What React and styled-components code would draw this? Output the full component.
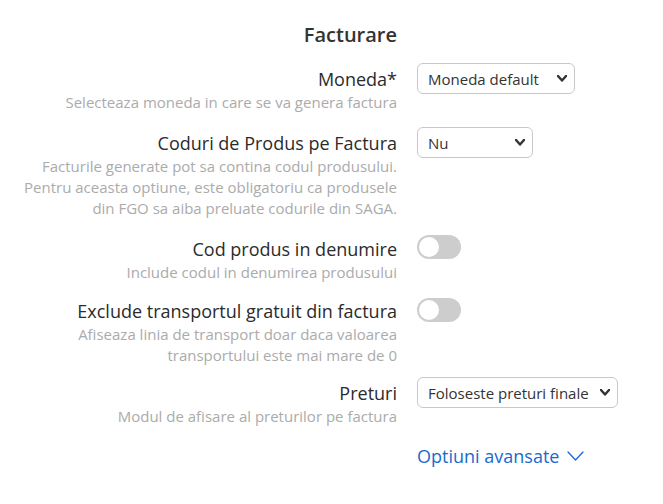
import React from 'react';
import styled, { createGlobalStyle } from 'styled-components';

const GlobalStyle = createGlobalStyle`
  html, body {
    margin: 0;
    padding: 0;
    background: #fff;
  }
  body {
    font-family: "Open Sans", "Noto Sans", sans-serif;
    color: #333;
  }
`;

const Page = styled.div`
  display: flex;
  flex-direction: column;
  padding-top: 22px;
`;

const Row = styled.div`
  display: grid;
  grid-template-columns: 397px 1fr;
  column-gap: 20px;
  margin-bottom: ${(p) => p.$gap ?? 16}px;
`;

const Title = styled.h2`
  margin: 0;
  text-align: right;
  font-size: 20px;
  font-weight: 600;
  line-height: 26px;
  color: #333;
`;

const LabelCol = styled.div`
  text-align: right;
`;

const Label = styled.div`
  font-size: 18px;
  line-height: 26px;
  color: #2b2b2b;
`;

const Desc = styled.div`
  font-size: 15px;
  line-height: 21px;
  color: #ababab;
`;

const Control = styled.div`
  display: flex;
  align-items: flex-start;
  margin-top: ${(p) => p.$offset ?? 0}px;
`;

const Select = styled.div`
  box-sizing: border-box;
  width: ${(p) => p.$width}px;
  height: 31px;
  border: 1px solid #c8c8c8;
  border-radius: 6px;
  background: #fff;
  display: flex;
  align-items: center;
  justify-content: space-between;
  padding: 0 7px 0 10px;
  font-size: 15px;
  color: #333;
`;

const Toggle = styled.div`
  width: 44px;
  height: 24px;
  border-radius: 12px;
  background: #cdcdcd;
  display: flex;
  align-items: center;
  padding: 2px;
  box-sizing: border-box;
`;

const Knob = styled.div`
  width: 20px;
  height: 20px;
  border-radius: 50%;
  background: #fff;
`;

const Advanced = styled.a`
  display: inline-flex;
  align-items: center;
  gap: 8px;
  color: #1a6ad0;
  font-size: 18px;
  line-height: 26px;
  text-decoration: none;
  cursor: pointer;
`;

const Chevron = ({ width = 10, height = 6.5, stroke = 2.4, color = '#333' }) => (
  <svg width={width} height={height} viewBox={`0 0 ${width} ${height}`} fill="none">
    <path
      d={`M1 1L${width / 2} ${height - 1}L${width - 1} 1`}
      stroke={color}
      strokeWidth={stroke}
      strokeLinecap="round"
      strokeLinejoin="round"
    />
  </svg>
);

const SelectBox = ({ width, value }) => (
  <Select $width={width}>
    <span>{value}</span>
    <Chevron />
  </Select>
);

const Switch = () => (
  <Toggle>
    <Knob />
  </Toggle>
);

export default function App() {
  return (
    <>
      <GlobalStyle />
      <Page>
        <Row $gap={18}>
          <Title>Facturare</Title>
        </Row>

        <Row $gap={17}>
          <LabelCol>
            <Label>Moneda*</Label>
            <Desc>Selecteaza moneda in care se va genera factura</Desc>
          </LabelCol>
          <Control $offset={-3}>
            <SelectBox width={158} value="Moneda default" />
          </Control>
        </Row>

        <Row $gap={17}>
          <LabelCol>
            <Label>Coduri de Produs pe Factura</Label>
            <Desc>
              Facturile generate pot sa contina codul produsului.
              <br />
              Pentru aceasta optiune, este obligatoriu ca produsele
              <br />
              din FGO sa aiba preluate codurile din SAGA.
            </Desc>
          </LabelCol>
          <Control $offset={-3}>
            <SelectBox width={116} value="Nu" />
          </Control>
        </Row>

        <Row $gap={15}>
          <LabelCol>
            <Label>Cod produs in denumire</Label>
            <Desc>Include codul in denumirea produsului</Desc>
          </LabelCol>
          <Control $offset={-1}>
            <Switch />
          </Control>
        </Row>

        <Row $gap={14}>
          <LabelCol>
            <Label>Exclude transportul gratuit din factura</Label>
            <Desc>
              Afiseaza linia de transport doar daca valoarea
              <br />
              transportului este mai mare de 0
            </Desc>
          </LabelCol>
          <Control $offset={0}>
            <Switch />
          </Control>
        </Row>

        <Row $gap={16}>
          <LabelCol>
            <Label>Preturi</Label>
            <Desc>Modul de afisare al preturilor pe factura</Desc>
          </LabelCol>
          <Control $offset={-3}>
            <SelectBox width={201} value="Foloseste preturi finale" />
          </Control>
        </Row>

        <Row>
          <div />
          <div>
            <Advanced>
              Optiuni avansate
              <Chevron width={17} height={10} stroke={1.3} color="#1a6ad0" />
            </Advanced>
          </div>
        </Row>
      </Page>
    </>
  );
}
